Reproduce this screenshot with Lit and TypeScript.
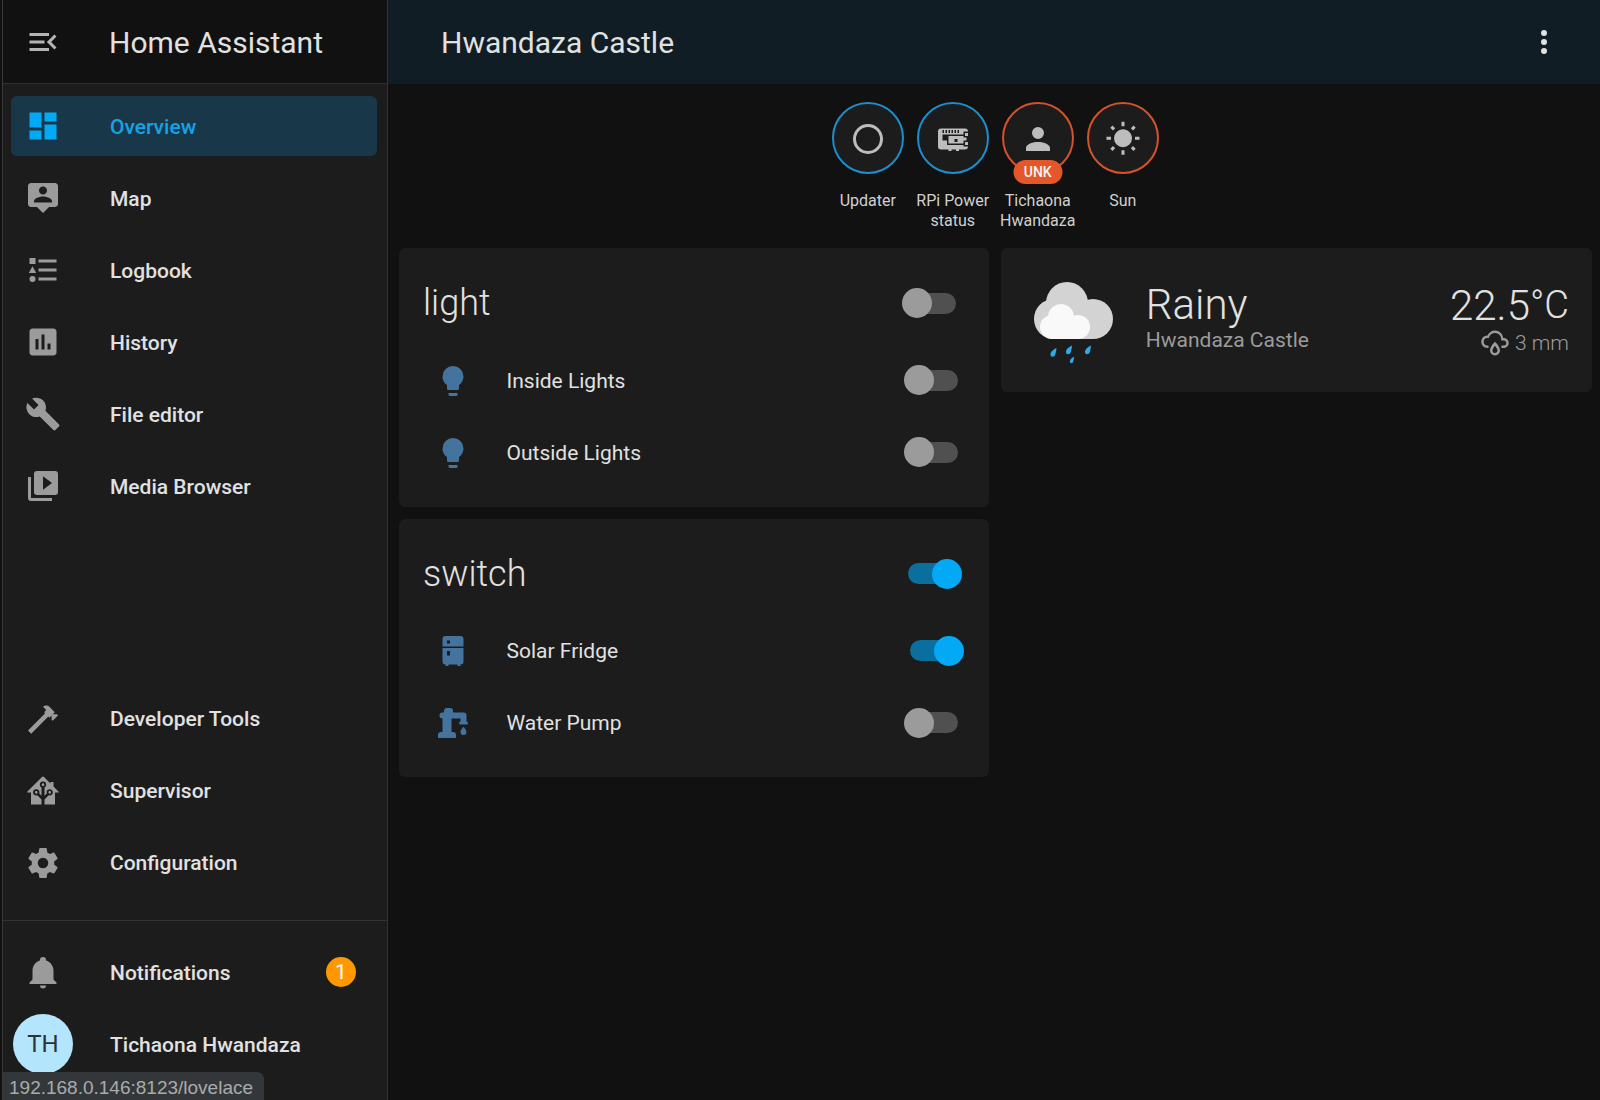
import { LitElement, css, html, svg } from "lit";
import { customElement } from "lit/decorators.js";
import { classMap } from "lit/directives/class-map.js";

const icons = {
  menuOpen: "M21,15.61L19.59,17L14.58,12L19.59,7L21,8.39L17.44,12L21,15.61M3,6H16V8H3V6M3,13V11H13V13H3M3,18V16H16V18H3Z",
  dashboard: "M13,3V9H21V3M13,21H21V11H13M3,21H11V15H3M3,13H11V3H3V13Z",
  map: "M20 2H4C2.9 2 2 2.9 2 4V16C2 17.1 2.9 18 4 18H8L12 22L16 18H20C21.1 18 22 17.1 22 16V4C22 2.9 21.1 2 20 2M12 4.3C13.5 4.3 14.7 5.5 14.7 7S13.5 9.7 12 9.7 9.3 8.5 9.3 7 10.5 4.3 12 4.3M18 15H6V14.1C6 12.1 10 11 12 11S18 12.1 18 14.1V15Z",
  logbook: "M5,9.5L7.5,14H2.5L5,9.5M3,4H7V8H3V4M5,20A2,2 0 0,0 7,18A2,2 0 0,0 5,16A2,2 0 0,0 3,18A2,2 0 0,0 5,20M9,5V7H21V5H9M9,19H21V17H9V19M9,13H21V11H9V13Z",
  history: "M19 3H5C3.9 3 3 3.9 3 5V19C3 20.1 3.9 21 5 21H19C20.1 21 21 20.1 21 19V5C21 3.9 20.1 3 19 3M9 17H7V10H9V17M13 17H11V7H13V17M17 17H15V13H17V17Z",
  wrench: "M22.7,19L13.6,9.9C14.5,7.6 14,4.9 12.1,3C10.1,1 7.1,0.6 4.7,1.7L9,6L6,9L1.6,4.7C0.4,7.1 0.9,10.1 2.9,12.1C4.8,14 7.5,14.5 9.8,13.6L18.9,22.7C19.3,23.1 19.9,23.1 20.3,22.7L22.6,20.4C23.1,20 23.1,19.3 22.7,19Z",
  media: "M4,6H2V20A2,2 0 0,0 4,22H18V20H4V6M20,2H8A2,2 0 0,0 6,4V16A2,2 0 0,0 8,18H20A2,2 0 0,0 22,16V4A2,2 0 0,0 20,2M12,14.5V5.5L18,10L12,14.5Z",
  hammer: "M2 19.63L13.43 8.2L12.72 7.5L14.14 6.07L12 3.89C13.2 2.7 15.09 2.7 16.27 3.89L19.87 7.5L18.45 8.91H21.29L22 9.62L18.45 13.21L17.74 12.5V9.62L16.27 11.1L15.56 10.39L4.13 21.82L2 19.63Z",
  supervisor: "M21.8,13H20V21H13V17.67L15.79,14.88L16.5,15C17.66,15 18.6,14.06 18.6,12.9C18.6,11.74 17.66,10.8 16.5,10.8A2.1,2.1 0 0,0 14.4,12.9L14.5,13.61L13,15.13V9.65C13.66,9.29 14.1,8.6 14.1,7.8A2.1,2.1 0 0,0 12,5.7A2.1,2.1 0 0,0 9.9,7.8C9.9,8.6 10.34,9.29 11,9.65V15.13L9.5,13.61L9.6,12.9A2.1,2.1 0 0,0 7.5,10.8A2.1,2.1 0 0,0 5.4,12.9A2.1,2.1 0 0,0 7.5,15L8.21,14.88L11,17.67V21H4V13H2.25C1.83,13 1.42,13 1.42,12.79C1.43,12.57 1.85,12.15 2.28,11.72L11,3C11.33,2.67 11.67,2.33 12,2.33C12.33,2.33 12.67,2.67 13,3L17,7V6H19V9L21.78,11.78C22.15,12.15 22.57,12.57 22.58,12.79C22.58,13 22.18,13 21.8,13M7.5,12A0.9,0.9 0 0,1 8.4,12.9A0.9,0.9 0 0,1 7.5,13.8A0.9,0.9 0 0,1 6.6,12.9A0.9,0.9 0 0,1 7.5,12M16.5,12C17,12 17.4,12.4 17.4,12.9C17.4,13.4 17,13.8 16.5,13.8A0.9,0.9 0 0,1 15.6,12.9A0.9,0.9 0 0,1 16.5,12M12,6.9C12.5,6.9 12.9,7.3 12.9,7.8C12.9,8.3 12.5,8.7 12,8.7C11.5,8.7 11.1,8.3 11.1,7.8C11.1,7.3 11.5,6.9 12,6.9Z",
  cog: "M12,15.5A3.5,3.5 0 0,1 8.5,12A3.5,3.5 0 0,1 12,8.5A3.5,3.5 0 0,1 15.5,12A3.5,3.5 0 0,1 12,15.5M19.43,12.97C19.47,12.65 19.5,12.33 19.5,12C19.5,11.67 19.47,11.34 19.43,11L21.54,9.37C21.73,9.22 21.78,8.95 21.66,8.73L19.66,5.27C19.54,5.05 19.27,4.96 19.05,5.05L16.56,6.05C16.04,5.66 15.5,5.32 14.87,5.07L14.5,2.42C14.46,2.18 14.25,2 14,2H10C9.75,2 9.54,2.18 9.5,2.42L9.13,5.07C8.5,5.32 7.96,5.66 7.44,6.05L4.95,5.05C4.73,4.96 4.46,5.05 4.34,5.27L2.34,8.73C2.21,8.95 2.27,9.22 2.46,9.37L4.57,11C4.53,11.34 4.5,11.67 4.5,12C4.5,12.33 4.53,12.65 4.57,12.97L2.46,14.63C2.27,14.78 2.21,15.05 2.34,15.27L4.34,18.73C4.46,18.95 4.73,19.03 4.95,18.95L7.44,17.94C7.96,18.34 8.5,18.68 9.13,18.93L9.5,21.58C9.54,21.82 9.75,22 10,22H14C14.25,22 14.46,21.82 14.5,21.58L14.87,18.93C15.5,18.67 16.04,18.34 16.56,17.94L19.05,18.95C19.27,19.03 19.54,18.95 19.66,18.73L21.66,15.27C21.78,15.05 21.73,14.78 21.54,14.63L19.43,12.97Z",
  bell: "M21,19V20H3V19L5,17V11C5,7.9 7.03,5.17 10,4.29C10,4.19 10,4.1 10,4A2,2 0 0,1 12,2A2,2 0 0,1 14,4C14,4.1 14,4.19 14,4.29C16.97,5.17 19,7.9 19,11V17L21,19M14,21A2,2 0 0,1 12,23A2,2 0 0,1 10,21",
  bulb: "M12,2A7,7 0 0,0 5,9C5,11.38 6.19,13.47 8,14.74V17A1,1 0 0,0 9,18H15A1,1 0 0,0 16,17V14.74C17.81,13.47 19,11.38 19,9A7,7 0 0,0 12,2M9,21A1,1 0 0,0 10,22H14A1,1 0 0,0 15,21V20H9V21Z",
  fridge: "M7,2H17A2,2 0 0,1 19,4V9H5V4A2,2 0 0,1 7,2M19,19A2,2 0 0,1 17,21V22H15V21H9V22H7V21A2,2 0 0,1 5,19V10H19V19M8,5V7H10V5H8M8,12V15H10V12H8Z",
  pump: "M19,14.5C19,14.5 21,16.67 21,18A2,2 0 0,1 19,20A2,2 0 0,1 17,18C17,16.67 19,14.5 19,14.5M5,18V9A2,2 0 0,1 3,7A2,2 0 0,1 5,5H6V4A2,2 0 0,1 8,2H10A2,2 0 0,1 12,4V5H19A2,2 0 0,1 21,7V9L21,11A1,1 0 0,1 22,12A1,1 0 0,1 21,13H17A1,1 0 0,1 16,12A1,1 0 0,1 17,11V9H11V18H12A2,2 0 0,1 14,20V22H2V20A2,2 0 0,1 4,18H5Z",
  circle: "M12,20A8,8 0 0,1 4,12A8,8 0 0,1 12,4A8,8 0 0,1 20,12A8,8 0 0,1 12,20M12,2A10,10 0 0,0 2,12A10,10 0 0,0 12,22A10,10 0 0,0 22,12A10,10 0 0,0 12,2Z",
  pi: "M20,8H22V10H20V8M4,5H20A2,2 0 0,1 22,7H19V9H5V13H8V16H19V17H22A2,2 0 0,1 20,19H16V20H14V19H11V20H9V19H4A2,2 0 0,1 2,17V7A2,2 0 0,1 4,5M19,15H9V10H19V11H21V13H19V15M13,12V14H15V12H13M5,6V8H6V6H5M7,6V8H8V6H7M9,6V8H10V6H9M11,6V8H12V6H11M13,6V8H14V6H13M15,6V8H16V6H15M20,14H22V16H20V14Z",
  account: "M12,4A4,4 0 0,1 16,8A4,4 0 0,1 12,12A4,4 0 0,1 8,8A4,4 0 0,1 12,4M12,14C16.42,14 20,15.79 20,18V20H4V18C4,15.79 7.58,14 12,14Z",
  sun: "M3.55,18.54L4.96,19.95L6.76,18.16L5.34,16.74M11,22.45C11.32,22.45 13,22.45 13,22.45V19.5H11M12,5.5A6,6 0 0,0 6,11.5A6,6 0 0,0 12,17.5A6,6 0 0,0 18,11.5C18,8.18 15.31,5.5 12,5.5M20,12.5H23V10.5H20M17.24,18.16L19.04,19.95L20.45,18.54L18.66,16.74M20.45,4.46L19.04,3.05L17.24,4.84L18.66,6.26M13,0.55H11V3.5H13M4,10.5H1V12.5H4M6.76,4.84L4.96,3.05L3.55,4.46L5.34,6.26L6.76,4.84Z",
  rain: "M6,14.03A1,1 0 0,1 7,15.03C7,15.58 6.55,16.03 6,16.03C3.24,16.03 1,13.79 1,11.03C1,8.27 3.24,6.03 6,6.03C7,3.68 9.3,2.03 12,2.03C15.43,2.03 18.24,4.69 18.5,8.06L19,8.03A4,4 0 0,1 23,12.03C23,14.24 21.21,16.03 19,16.03H18C17.45,16.03 17,15.58 17,15.03C17,14.47 17.45,14.03 18,14.03H19A2,2 0 0,0 21,12.03A2,2 0 0,0 19,10.03H17V9.03C17,6.27 14.76,4.03 12,4.03C9.5,4.03 7.45,5.84 7.06,8.21C6.73,8.09 6.37,8.03 6,8.03A3,3 0 0,0 3,11.03A3,3 0 0,0 6,14.03M12,14.15C12.18,14.39 12.37,14.66 12.56,14.94C13,15.56 14,17.03 14,18C14,19.11 13.1,20 12,20A2,2 0 0,1 10,18C10,17.03 11,15.56 11.44,14.94C11.63,14.66 11.82,14.4 12,14.15M12,11.03L10.5,12.59C10.5,12.59 8,15.46 8,18A4,4 0 0,0 12,22A4,4 0 0,0 16,18C16,15.46 13.5,12.59 13.5,12.59L12,11.03Z",
  dots: "M12,16A2,2 0 0,1 14,18A2,2 0 0,1 12,20A2,2 0 0,1 10,18A2,2 0 0,1 12,16M12,10A2,2 0 0,1 14,12A2,2 0 0,1 12,14A2,2 0 0,1 10,12A2,2 0 0,1 12,10M12,4A2,2 0 0,1 14,6A2,2 0 0,1 12,8A2,2 0 0,1 10,6A2,2 0 0,1 12,4Z",
};

const topNav = [
  { icon: icons.dashboard, label: "Overview", active: true },
  { icon: icons.map, label: "Map" },
  { icon: icons.logbook, label: "Logbook" },
  { icon: icons.history, label: "History" },
  { icon: icons.wrench, label: "File editor" },
  { icon: icons.media, label: "Media Browser" },
];

const lowerNav = [
  { icon: icons.hammer, label: "Developer Tools" },
  { icon: icons.supervisor, label: "Supervisor" },
  { icon: icons.cog, label: "Configuration" },
];

const badges = [
  { icon: icons.circle, label: "Updater", warm: false },
  { icon: icons.pi, label: "RPi Power status", warm: false },
  { icon: icons.account, label: "Tichaona Hwandaza", warm: true, tag: "UNK" },
  { icon: icons.sun, label: "Sun", warm: true },
];

const cards = [
  {
    title: "light",
    on: false,
    rows: [
      { icon: icons.bulb, label: "Inside Lights", on: false },
      { icon: icons.bulb, label: "Outside Lights", on: false },
    ],
  },
  {
    title: "switch",
    on: true,
    rows: [
      { icon: icons.fridge, label: "Solar Fridge", on: true },
      { icon: icons.pump, label: "Water Pump", on: false },
    ],
  },
];

const icon = (d: string) => html`<svg class="icon" viewBox="0 0 24 24"><path d=${d}></path></svg>`;

const drop = "M3 -4.500C0 -3 -3 -1 -3 2C-3 5 1 5 1.800 2C2.400 0 2.800 -2 3 -4.500Z";

const cloud = svg`
  <circle cx="33" cy="21" r="21" fill="#d3d3d3"></circle>
  <circle cx="20" cy="37" r="20" fill="#d3d3d3"></circle>
  <circle cx="59" cy="37" r="20" fill="#d3d3d3"></circle>
  <rect x="20" y="30" width="39" height="27" fill="#d3d3d3"></rect>
  <circle cx="27" cy="35" r="13" fill="#f9f9f9"></circle>
  <circle cx="18" cy="45" r="12" fill="#f9f9f9"></circle>
  <circle cx="44" cy="45" r="12" fill="#f9f9f9"></circle>
  <rect x="18" y="40" width="26" height="17" fill="#f9f9f9"></rect>
  <g fill="#2fa9ee">
    <path transform="translate(19.500 70.500)" d=${drop}></path>
    <path transform="translate(35 68)" d=${drop}></path>
    <path transform="translate(54 68)" d=${drop}></path>
    <path transform="translate(38 78) scale(.7)" d=${drop}></path>
  </g>
`;

@customElement("app-root")
export class AppRoot extends LitElement {
  navItem(item: { icon: string; label: string; active?: boolean }) {
    return html`
      <a class=${classMap({ item: true, active: !!item.active })}>
        ${icon(item.icon)}
        <span>${item.label}</span>
      </a>
    `;
  }

  toggle(on: boolean) {
    return html`<div class=${classMap({ toggle: true, on })}><i></i><b></b></div>`;
  }

  render() {
    return html`
      <aside>
        <header class="side-head">
          ${icon(icons.menuOpen)}
          <span>Home Assistant</span>
        </header>
        <nav>
          ${topNav.map((n) => this.navItem(n))}
          <div class="grow"></div>
          ${lowerNav.map((n) => this.navItem(n))}
        </nav>
        <div class="bottom">
          <a class="row-link">
            ${icon(icons.bell)}
            <span>Notifications</span>
            <em class="count">1</em>
          </a>
          <a class="row-link">
            <div class="avatar">TH</div>
            <span>Tichaona Hwandaza</span>
          </a>
        </div>
      </aside>
      <main>
        <header class="top">
          <span>Hwandaza Castle</span>
          ${icon(icons.dots)}
        </header>
        <section class="content">
          <div class="badges">
            ${badges.map(
              (b) => html`
                <div class="badge">
                  <div class=${classMap({ ring: true, warm: b.warm })}>
                    ${icon(b.icon)}
                    ${b.tag ? html`<span class="tag">${b.tag}</span>` : ""}
                  </div>
                  <div class="badge-label">${b.label}</div>
                </div>
              `,
            )}
          </div>
          <div class="columns">
            <div class="stack">
              ${cards.map(
                (c) => html`
                  <div class="card">
                    <div class="card-head">
                      <span>${c.title}</span>
                      ${this.toggle(c.on)}
                    </div>
                    ${c.rows.map(
                      (r) => html`
                        <div class="row">
                          ${icon(r.icon)}
                          <span>${r.label}</span>
                          ${this.toggle(r.on)}
                        </div>
                      `,
                    )}
                  </div>
                `,
              )}
            </div>
            <div class="stack">
              <div class="weather">
                <svg class="cloud" viewBox="0 0 80 82">${cloud}</svg>
                <div class="w-main">
                  <div class="big">Rainy</div>
                  <div class="sub">Hwandaza Castle</div>
                </div>
                <div class="w-side">
                  <div class="big">22.5<span class="unit">°C</span></div>
                  <div class="sub">${icon(icons.rain)}3 mm</div>
                </div>
              </div>
            </div>
          </div>
        </section>
      </main>
      <div class="status">192.168.0.146:8123/lovelace</div>
    `;
  }

  static styles = css`
    :host {
      display: flex;
      position: relative;
      width: 1600px;
      height: 1100px;
      overflow: hidden;
      background: #111;
      color: #e1e1e1;
      font-family: Roboto, "Liberation Sans", sans-serif;
    }

    .icon {
      width: 36px;
      height: 36px;
      flex: none;
      fill: #9b9b9b;
    }

    aside {
      width: 386px;
      margin-left: 2px;
      box-sizing: border-box;
      display: flex;
      flex-direction: column;
      flex: none;
      background: #1c1c1c;
      border-left: 1px solid #3a3a3a;
      border-right: 1px solid #333;
    }

    .side-head {
      height: 84px;
      box-sizing: border-box;
      flex: none;
      display: flex;
      align-items: center;
      gap: 48px;
      padding: 1px 0 0 22px;
      background: #111;
      border-bottom: 1px solid #2f2f2f;
      font-size: 30px;
    }

    .side-head .icon {
      fill: #b5b5b5;
      margin-top: -1px;
    }

    nav {
      flex: 1;
      display: flex;
      flex-direction: column;
      gap: 12px;
      padding: 12px 0 27px;
    }

    .grow {
      flex: 1;
    }

    .item {
      height: 60px;
      flex: none;
      display: flex;
      align-items: center;
      gap: 49px;
      margin: 0 10px 0 8px;
      padding-left: 14px;
      border-radius: 6px;
      font-size: 21px;
      font-weight: 500;
    }

    .item span {
      padding-top: 2px;
    }

    .grow ~ .item span {
      padding-top: 0;
    }

    .item.active {
      background: #183849;
      color: #16a2e8;
    }

    .item.active .icon {
      fill: #03a9f4;
    }

    .bottom {
      flex: none;
      height: 180px;
      box-sizing: border-box;
      padding-top: 15px;
      border-top: 1px solid #333;
    }

    .row-link {
      height: 72px;
      display: flex;
      align-items: center;
      gap: 49px;
      padding-left: 22px;
      font-size: 21px;
      font-weight: 500;
    }

    .row-link span {
      padding-top: 2px;
    }

    .count {
      width: 30px;
      height: 30px;
      margin-left: auto;
      margin-right: 31px;
      border-radius: 50%;
      background: #ff9800;
      color: #fff;
      font-style: normal;
      font-weight: 400;
      text-align: center;
      line-height: 30px;
    }

    .avatar {
      width: 60px;
      height: 60px;
      flex: none;
      margin: 0 -12px;
      border-radius: 50%;
      background: #b3e5fc;
      color: #2c3338;
      font-size: 24px;
      font-weight: 400;
      line-height: 60px;
      text-align: center;
    }

    main {
      flex: 1;
      min-width: 0;
    }

    .top {
      height: 84px;
      box-sizing: border-box;
      display: flex;
      align-items: center;
      justify-content: space-between;
      padding: 0 38px 0 53px;
      background: #101d24;
      font-size: 30px;
    }

    .top .icon {
      fill: #e1e1e1;
    }

    .content {
      padding: 18px 8px 0 10.5px;
    }

    .badges {
      display: flex;
      justify-content: center;
      height: 146px;
    }

    .badge {
      width: 85px;
      display: flex;
      flex-direction: column;
      align-items: center;
    }

    .ring {
      position: relative;
      width: 72px;
      height: 72px;
      box-sizing: border-box;
      display: flex;
      align-items: center;
      justify-content: center;
      border: 2px solid #1b8ecb;
      border-radius: 50%;
      background: #1c1c1c;
    }

    .ring.warm {
      border-color: #d5522a;
    }

    .ring .icon {
      fill: #bdbdbd;
      margin-top: 1px;
    }

    .tag {
      position: absolute;
      left: 50%;
      bottom: -12px;
      width: 49px;
      height: 24px;
      transform: translateX(-50%);
      border-radius: 12px;
      background: #e4572a;
      color: #f3f3f3;
      font-size: 14px;
      font-weight: 500;
      line-height: 24px;
      text-align: center;
    }

    .badge-label {
      margin-top: 17px;
      font-size: 16px;
      line-height: 19.5px;
      text-align: center;
      color: #d0d0d0;
    }

    .columns {
      display: grid;
      grid-template-columns: 1fr 1fr;
      gap: 12px;
    }

    .stack {
      display: flex;
      flex-direction: column;
      gap: 12px;
    }

    .card {
      padding-bottom: 18.5px;
      border-radius: 6px;
      background: #1c1c1c;
    }

    .card-head {
      height: 96px;
      box-sizing: border-box;
      display: flex;
      align-items: center;
      justify-content: space-between;
      padding: 24px 27.5px 10px 24.5px;
      font-size: 36px;
      font-weight: 300;
    }

    .row {
      height: 72px;
      display: flex;
      align-items: center;
      gap: 36px;
      padding: 0 25.5px 0 36px;
      font-size: 21px;
    }

    .row span {
      flex: 1;
      padding-top: 1px;
    }

    .row .icon {
      fill: #44739e;
      margin-top: 1px;
    }

    .toggle {
      position: relative;
      width: 60px;
      height: 30px;
      flex: none;
    }

    .toggle i {
      position: absolute;
      left: 6px;
      top: 4.500px;
      width: 48px;
      height: 21px;
      border-radius: 11px;
      background: #505050;
    }

    .toggle b {
      position: absolute;
      left: 0;
      top: 0;
      width: 30px;
      height: 30px;
      border-radius: 50%;
      background: #9b9b9b;
    }

    .toggle.on i {
      background: #0a6e9e;
    }

    .toggle.on b {
      left: 30px;
      background: #03a9f4;
    }

    .weather {
      height: 144px;
      box-sizing: border-box;
      display: flex;
      align-items: flex-start;
      padding: 32px 23px 0 32.5px;
      border-radius: 6px;
      background: #1c1c1c;
    }

    .cloud {
      width: 80px;
      height: 82px;
      flex: none;
      margin-top: 2px;
    }

    .w-main {
      flex: 1;
      margin-left: 32px;
    }

    .w-side {
      text-align: right;
    }

    .big {
      font-size: 42px;
      font-weight: 300;
      line-height: 48px;
      padding-top: 1px;
    }

    .unit {
      font-size: 38px;
      vertical-align: 2px;
    }

    .sub {
      display: flex;
      align-items: center;
      font-size: 21px;
      line-height: 23px;
      color: #9b9b9b;
      font-weight: 400;
    }

    .w-side .sub {
      justify-content: flex-end;
      margin-top: -2px;
      gap: 5px;
      font-weight: 300;
    }

    .w-side .icon {
      width: 30px;
      height: 30px;
    }

    .status {
      position: absolute;
      left: 3px;
      bottom: 0;
      height: 28px;
      padding: 0 11px 0 6px;
      border-radius: 0 7px 0 0;
      background: #34373a;
      color: #a9abab;
      font-family: "Liberation Sans", Arial, sans-serif;
      font-size: 19px;
      line-height: 31px;
    }
  `;
}
